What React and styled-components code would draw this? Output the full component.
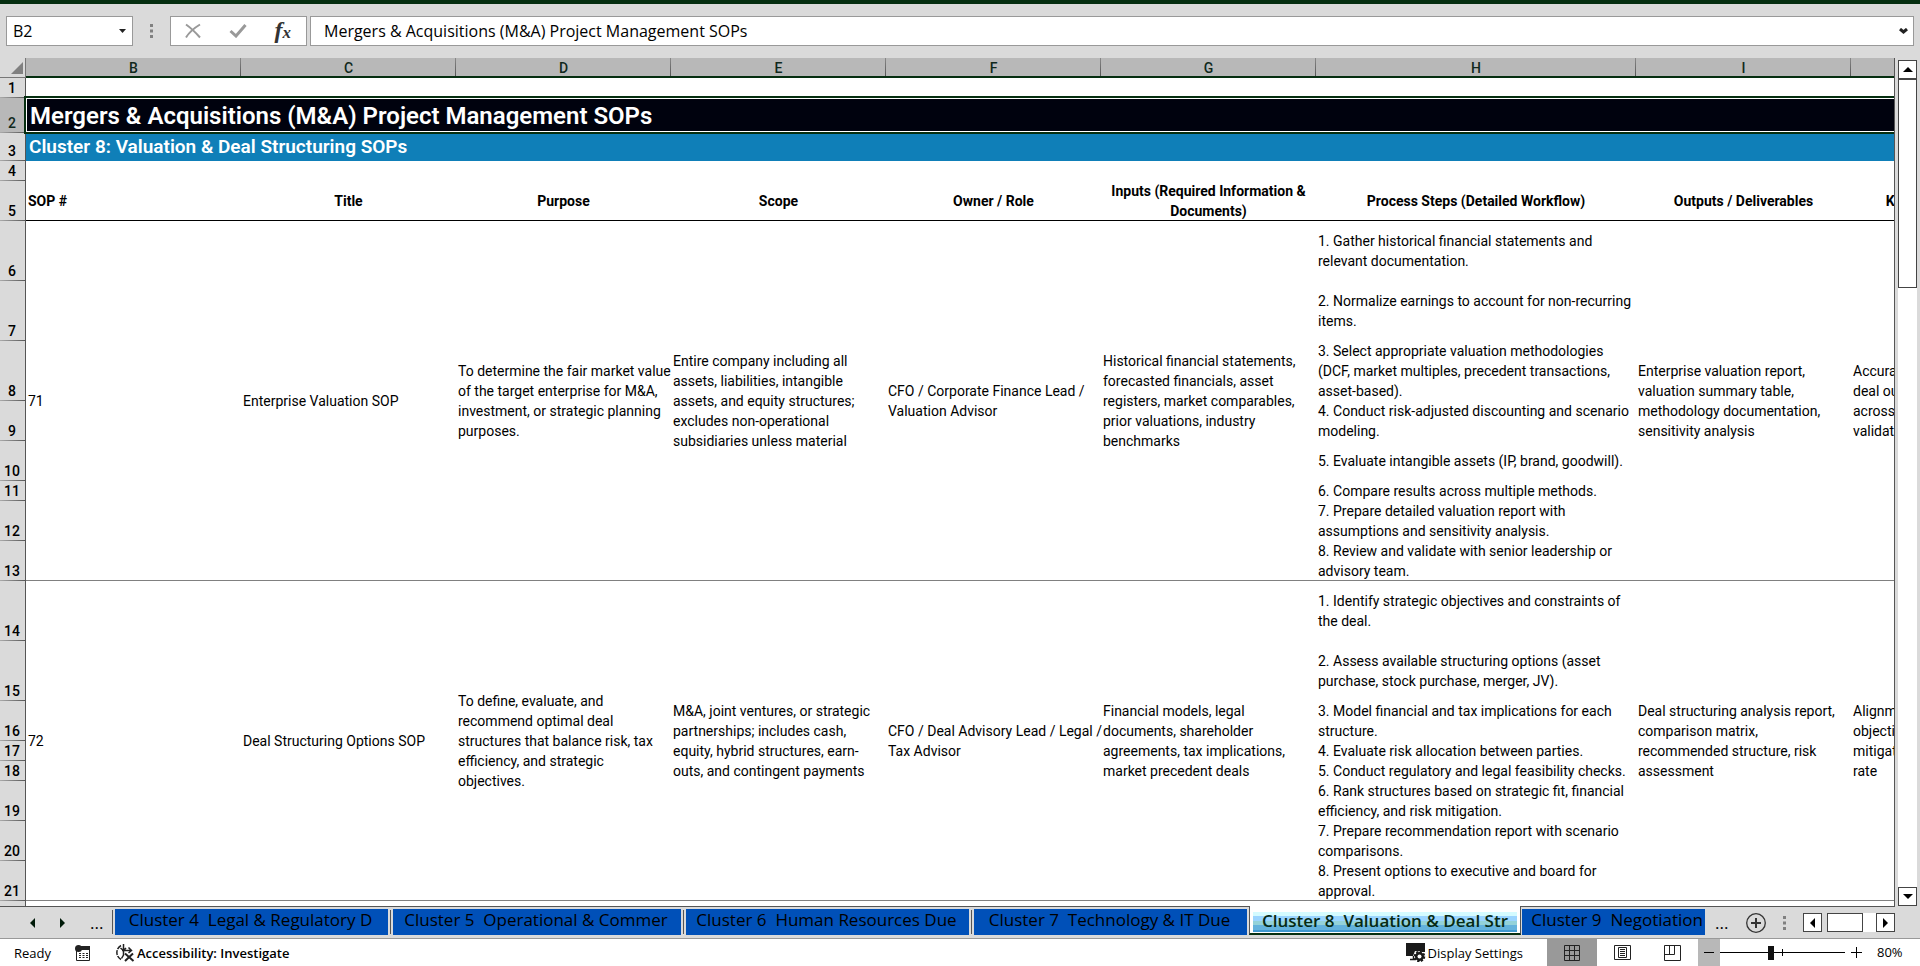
import React from 'react';
import styled, { createGlobalStyle } from 'styled-components';

const uiFont = `'Open Sans', 'Noto Sans', sans-serif`;
const cellFont = `Roboto, 'Liberation Sans', sans-serif`;

const columns = [
	{ letter: 'B', width: 215, title: 'SOP #' },
	{ letter: 'C', width: 215, title: 'Title' },
	{ letter: 'D', width: 215, title: 'Purpose' },
	{ letter: 'E', width: 215, title: 'Scope' },
	{ letter: 'F', width: 215, title: 'Owner / Role' },
	{ letter: 'G', width: 215, title: 'Inputs (Required Information &\nDocuments)' },
	{ letter: 'H', width: 320, title: 'Process Steps (Detailed Workflow)' },
	{ letter: 'I', width: 215, title: 'Outputs / Deliverables' },
	{ letter: 'J', width: 215, title: 'KPIs / Success Metrics' },
];

const sops = [
	{
		firstRow: 6,
		before: [
			'71',
			'Enterprise Valuation SOP',
			'To determine the fair market value\nof the target enterprise for M&A,\ninvestment, or strategic planning\npurposes.',
			'Entire company including all\nassets, liabilities, intangible\nassets, and equity structures;\nexcludes non-operational\nsubsidiaries unless material',
			'CFO / Corporate Finance Lead /\nValuation Advisor',
			'Historical financial statements,\nforecasted financials, asset\nregisters, market comparables,\nprior valuations, industry\nbenchmarks',
		],
		steps: [
			{ height: 60, text: '1. Gather historical financial statements and\nrelevant documentation.' },
			{ height: 60, text: '2. Normalize earnings to account for non-recurring\nitems.' },
			{ height: 60, text: '3. Select appropriate valuation methodologies\n(DCF, market multiples, precedent transactions,\nasset-based).' },
			{ height: 40, text: '4. Conduct risk-adjusted discounting and scenario\nmodeling.' },
			{ height: 40, text: '5. Evaluate intangible assets (IP, brand, goodwill).' },
			{ height: 20, text: '6. Compare results across multiple methods.' },
			{ height: 40, text: '7. Prepare detailed valuation report with\nassumptions and sensitivity analysis.' },
			{ height: 40, text: '8. Review and validate with senior leadership or\nadvisory team.' },
		],
		after: [
			'Enterprise valuation report,\nvaluation summary table,\nmethodology documentation,\nsensitivity analysis',
			'Accuracy of valuation,\ndeal outcomes\nacross methods,\nvalidation rate',
		],
	},
	{
		firstRow: 14,
		before: [
			'72',
			'Deal Structuring Options SOP',
			'To define, evaluate, and\nrecommend optimal deal\nstructures that balance risk, tax\nefficiency, and strategic\nobjectives.',
			'M&A, joint ventures, or strategic\npartnerships; includes cash,\nequity, hybrid structures, earn-\nouts, and contingent payments',
			'CFO / Deal Advisory Lead / Legal /\nTax Advisor',
			'Financial models, legal\ndocuments, shareholder\nagreements, tax implications,\nmarket precedent deals',
		],
		steps: [
			{ height: 60, text: '1. Identify strategic objectives and constraints of\nthe deal.' },
			{ height: 60, text: '2. Assess available structuring options (asset\npurchase, stock purchase, merger, JV).' },
			{ height: 40, text: '3. Model financial and tax implications for each\nstructure.' },
			{ height: 20, text: '4. Evaluate risk allocation between parties.' },
			{ height: 20, text: '5. Conduct regulatory and legal feasibility checks.' },
			{ height: 40, text: '6. Rank structures based on strategic fit, financial\nefficiency, and risk mitigation.' },
			{ height: 40, text: '7. Prepare recommendation report with scenario\ncomparisons.' },
			{ height: 40, text: '8. Present options to executive and board for\napproval.' },
		],
		after: [
			'Deal structuring analysis report,\ncomparison matrix,\nrecommended structure, risk\nassessment',
			'Alignment with\nobjectives, risk\nmitigation success\nrate',
		],
	},
];

const sheetTabs = [
	{ name: 'Cluster 4  Legal & Regulatory D', width: 273 },
	{ name: 'Cluster 5  Operational & Commer', width: 288 },
	{ name: 'Cluster 6  Human Resources Due', width: 283 },
	{ name: 'Cluster 7  Technology & IT Due', width: 273 },
];

const CancelIcon = () => (
	<svg width='18' height='16' viewBox='0 0 18 16' fill='none' stroke='#999' strokeWidth='2'>
		<path d='M2 1.5C7 5 12 10 16 14.500M16 1.500C11 4.500 5 9.500 2 14.500' />
	</svg>
);

const EnterIcon = () => (
	<svg width='18' height='14' viewBox='0 0 18 14' fill='none' stroke='#999' strokeWidth='3'>
		<path d='M1.500 7L7 12L16.500 1' />
	</svg>
);

const MacroIcon = () => (
	<svg width='16' height='16' viewBox='0 0 16 16'>
		<path d='M1.500 6V15.500H14.500V4' fill='none' stroke='#222' />
		<path d='M6 1H15V5H6z' fill='#222' />
		<circle cx='3.500' cy='3.500' r='3.500' fill='#222' />
		<path d='M4 8.500H6M7.500 8.500H9.500M11 8.500H13M4 10.500H6M7.500 10.500H9.500M11 10.500H13M4 12.500H6M7.500 12.500H9.500M11 12.500H13' stroke='#222' />
	</svg>
);

const AccessibilityIcon = () => (
	<svg width='20' height='18' viewBox='0 0 20 18' fill='none' stroke='#222'>
		<path d='M6 1.500A8 8 0 0 0 6 15.500' strokeWidth='1.500' strokeDasharray='5 1' />
		<path d='M8.500 0V6M5.500 4L8.500 6.500L11 4M7 6.500H16M13.500 3.500L16.500 6.500L13.500 9M8.500 6.500V11L6.500 14.500' strokeWidth='1.500' />
		<path d='M10 9.500L18.500 17M18 9.500L10 17' strokeWidth='2' />
	</svg>
);

const DisplayIcon = () => (
	<svg width='20' height='19' viewBox='0 0 20 19'>
		<path d='M0 0H19V9H16L9 8L7 13H0z' fill='#1a1a1a' />
		<path d='M4 16.500H9M7.500 13V16' stroke='#1a1a1a' strokeWidth='1.500' />
		<circle cx='13.500' cy='13.500' r='5' fill='#1a1a1a' stroke='#fff' strokeWidth='1' />
		<circle cx='13.500' cy='13.500' r='4.500' fill='none' stroke='#1a1a1a' strokeWidth='2.500' strokeDasharray='2 1.500' />
		<circle cx='13.500' cy='13.500' r='2' fill='#fff' />
	</svg>
);

const NormalViewIcon = () => (
	<svg width='16' height='16' viewBox='0 0 16 16' fill='none' stroke='#222'>
		<path d='M.5 .5H15.500V15.500H.5zM5.500 .5V15.500M10.500 .5V15.500M.5 5.500H15.500M.5 10.500H15.500' />
	</svg>
);

const PageLayoutIcon = () => (
	<svg width='17' height='15' viewBox='0 0 17 15' fill='none' stroke='#222'>
		<path d='M.5 .5H16.500V14.500H.5zM4.500 2.500H12.500V12.500H4.500zM6 4.500H11M6 6.500H11M6 8.500H11M6 10.500H11' />
	</svg>
);

const PageBreakIcon = () => (
	<svg width='17' height='16' viewBox='0 0 17 16' fill='none' stroke='#222'>
		<path d='M.5 .5H16.500V15.500H.5zM.5 9.500H10.500V.5M5.500 .5V9.500' />
	</svg>
);

const AddSheetIcon = () => (
	<svg width='20' height='20' viewBox='0 0 20 20' fill='none' stroke='#333'>
		<circle cx='10' cy='10' r='9.300' strokeWidth='1.300' />
		<path d='M10 5V15M5 10H15' strokeWidth='2' />
	</svg>
);

const Dots = () => (
	<svg width='3' height='14' viewBox='0 0 3 14' fill='#808080'>
		<path d='M0 0H3V3H0zM0 5.500H3V8.500H0zM0 11H3V14H0z' />
	</svg>
);

const arrows = {
	left: { size: [5, 10], d: 'M5 0V10L0 5z' },
	right: { size: [5, 10], d: 'M0 0V10L5 5z' },
	up: { size: [10, 5], d: 'M0 5H10L5 0z' },
	down: { size: [10, 5], d: 'M0 0H10L5 5z' },
	small: { size: [7, 4], d: 'M0 0H7L3.500 4z' },
};

const Arrow = ({ to, color = '#000' }) => {
	const [w, h] = arrows[to].size;
	return (
		<svg width={w} height={h} viewBox={`0 0 ${w} ${h}`} fill={color}>
			<path d={arrows[to].d} />
		</svg>
	);
};

const App = () => {
	return (
		<Window>
			<GlobalStyle />
			<FormulaBar>
				<NameBox>
					<BarInput aria-label='Name box' defaultValue='B2' />
					<PlainButton aria-label='Open name list'>
						<Arrow to='small' color='#222' />
					</PlainButton>
				</NameBox>
				<DotsHandle>
					<Dots />
				</DotsHandle>
				<FormulaActions>
					<PlainButton aria-label='Cancel'>
						<CancelIcon />
					</PlainButton>
					<PlainButton aria-label='Enter'>
						<EnterIcon />
					</PlainButton>
					<FxButton aria-label='Insert function'>
						f<small>x</small>
					</FxButton>
				</FormulaActions>
				<FormulaField>
					<BarInput
						aria-label='Formula'
						defaultValue='Mergers & Acquisitions (M&A) Project Management SOPs'
					/>
					<PlainButton aria-label='Expand formula bar'>
						<svg width='9' height='6' viewBox='0 0 9 6' fill='none' stroke='#222' strokeWidth='3'>
							<path d='M1 1L4.500 4L8 1' />
						</svg>
					</PlainButton>
				</FormulaField>
			</FormulaBar>

			<Main>
				<Sheet>
					<Table>
						<colgroup>
							<Col $width={26} />
							{columns.map((col) => (
								<Col key={col.letter} $width={col.width} />
							))}
						</colgroup>
						<thead>
							<Row $height={20}>
								<Corner>
									<svg width='12' height='12' viewBox='0 0 12 12' fill='#808080'>
										<path d='M12 0V12H0z' />
									</svg>
								</Corner>
								{columns.map((col) => (
									<ColumnHead key={col.letter} scope='col'>
										{col.letter}
									</ColumnHead>
								))}
							</Row>
						</thead>
						<tbody>
							<Row $height={20}>
								<RowHead scope='row'>1</RowHead>
								<Cell colSpan={9} />
							</Row>
							<Row $height={35}>
								<RowHead scope='row' $selected>
									2
								</RowHead>
								<TitleCell colSpan={9}>Mergers & Acquisitions (M&A) Project Management SOPs</TitleCell>
							</Row>
							<Row $height={28}>
								<RowHead scope='row'>3</RowHead>
								<SubtitleCell colSpan={9}>Cluster 8: Valuation & Deal Structuring SOPs</SubtitleCell>
							</Row>
							<Row $height={20}>
								<RowHead scope='row'>4</RowHead>
								<Cell colSpan={9} />
							</Row>
							<Row $height={40}>
								<RowHead scope='row'>5</RowHead>
								{columns.map((col, i) => (
									<HeadingCell key={col.letter} $left={i === 0}>
										{col.title}
									</HeadingCell>
								))}
							</Row>
							{sops.map((sop) =>
								sop.steps.map((step, i) => (
									<Row key={step.text} $height={step.height}>
										<RowHead scope='row'>{sop.firstRow + i}</RowHead>
										{i === 0 &&
											sop.before.map((text) => (
												<Cell key={text} rowSpan={8} $line>
													{text}
												</Cell>
											))}
										<Cell $line={i === 7}>{step.text}</Cell>
										{i === 0 &&
											sop.after.map((text) => (
												<Cell key={text} rowSpan={8} $line>
													{text}
												</Cell>
											))}
									</Row>
								))
							)}
							<Row $height={20}>
								<RowHead />
								<Cell colSpan={9} />
							</Row>
						</tbody>
					</Table>
				</Sheet>
				<VerticalScroll>
					<ScrollButton aria-label='Scroll up'>
						<Arrow to='up' />
					</ScrollButton>
					<VerticalThumb />
					<ScrollButton aria-label='Scroll down'>
						<Arrow to='down' />
					</ScrollButton>
				</VerticalScroll>
			</Main>

			<TabBar>
				<TabNav>
					<PlainButton aria-label='Previous sheet'>
						<Arrow to='left' color='#001a08' />
					</PlainButton>
					<PlainButton aria-label='Next sheet'>
						<Arrow to='right' color='#001a08' />
					</PlainButton>
					<PlainButton>...</PlainButton>
				</TabNav>
				<Tabs role='tablist'>
					{sheetTabs.map((tab) => (
						<TabSlot key={tab.name}>
							<Tab role='tab' $width={tab.width}>
								{tab.name}
							</Tab>
						</TabSlot>
					))}
					<ActiveTab role='tab' aria-selected='true'>
						<span>Cluster 8  Valuation & Deal Str</span>
					</ActiveTab>
					<LastTabSlot>
						<Tab role='tab' $width={183} $align='right'>
							Cluster 9  Negotiation
						</Tab>
					</LastTabSlot>
				</Tabs>
				<TabTools>
					<PlainButton>...</PlainButton>
					<PlainButton aria-label='New sheet'>
						<AddSheetIcon />
					</PlainButton>
					<Dots />
					<HorizontalScroll>
						<ScrollButton aria-label='Scroll left'>
							<Arrow to='left' />
						</ScrollButton>
						<HorizontalTrack>
							<HorizontalThumb />
						</HorizontalTrack>
						<ScrollButton aria-label='Scroll right'>
							<Arrow to='right' />
						</ScrollButton>
					</HorizontalScroll>
				</TabTools>
			</TabBar>

			<StatusBar>
				<StatusGroup>
					<span>Ready</span>
					<PlainButton aria-label='Record macro'>
						<MacroIcon />
					</PlainButton>
					<StatusButton $bold>
						<AccessibilityIcon />
						Accessibility: Investigate
					</StatusButton>
				</StatusGroup>
				<StatusTools>
					<StatusButton>
						<DisplayIcon />
						Display Settings
					</StatusButton>
					<Views>
						<ViewButton aria-label='Normal' $active>
							<NormalViewIcon />
						</ViewButton>
						<ViewButton aria-label='Page layout'>
							<PageLayoutIcon />
						</ViewButton>
						<ViewButton aria-label='Page break preview'>
							<PageBreakIcon />
						</ViewButton>
					</Views>
					<ZoomOut aria-label='Zoom out'>
						<svg width='10' height='1'>
							<path d='M0 .5H10' stroke='#000' />
						</svg>
					</ZoomOut>
					<ZoomSlider type='range' min='0' max='200' defaultValue='80' aria-label='Zoom' />
					<ZoomIn aria-label='Zoom in'>
						<svg width='11' height='11' stroke='#000'>
							<path d='M0 5.500H11M5.500 0V11' />
						</svg>
					</ZoomIn>
					<ZoomValue>80%</ZoomValue>
				</StatusTools>
			</StatusBar>
		</Window>
	);
};

const GlobalStyle = createGlobalStyle`
	* {
		box-sizing: border-box;
	}

	body {
		margin: 0;
		overflow: hidden;
	}

	button,
	input {
		font: inherit;
		color: inherit;
	}

	svg {
		display: block;
		flex: none;
	}
`;

const Window = styled.div`
	display: flex;
	flex-direction: column;
	height: 100vh;
	border-top: 4px solid #052e10;
	background: #dadada;
	color: #000;
	font: 17px/20px ${uiFont};
`;

const PlainButton = styled.button`
	display: flex;
	align-items: center;
	justify-content: center;
	padding: 0;
	border: 0;
	background: none;
`;

const FormulaBar = styled.div`
	display: flex;
	padding: 12px 6px;
`;

const Box = styled.div`
	display: flex;
	align-items: center;
	height: 30px;
	border: 1px solid #999;
	background: #fff;
`;

const NameBox = styled(Box)`
	width: 127px;
	padding: 0 6px;
`;

const BarInput = styled.input`
	flex: 1;
	min-width: 0;
	padding: 0;
	border: 0;
	outline: 0;
	font-size: 16px;
	text-overflow: ellipsis;
`;

const DotsHandle = styled.div`
	display: flex;
	align-items: center;
	justify-content: center;
	width: 37px;
`;

const FormulaActions = styled(Box)`
	justify-content: space-between;
	width: 137px;
	margin-right: 3px;
	padding: 0 15px 0 13px;
`;

const FxButton = styled(PlainButton)`
	align-items: baseline;
	color: #333;
	font: italic bold 24px/24px 'Liberation Serif', serif;

	small {
		font-size: 17px;
	}
`;

const FormulaField = styled(Box)`
	flex: 1;
	padding: 0 5px 0 13px;
`;

const Main = styled.main`
	display: flex;
	flex: 1;
	min-height: 0;
`;

const Sheet = styled.div`
	flex: 1;
	min-width: 0;
	overflow: hidden;
	border-right: 1px solid #555;
	background: #fff;
`;

const Table = styled.table`
	width: 0;
	table-layout: fixed;
	border-collapse: separate;
	border-spacing: 0;
	font: 14px/20px ${cellFont};
`;

const Col = styled.col`
	width: ${(props) => props.$width}px;
`;

const Row = styled.tr`
	height: ${(props) => props.$height}px;
`;

const Corner = styled.td`
	padding: 4px 3px;
	background: #dadada;
	box-shadow: inset -1px 0 #777, inset 0 -1px #777;

	svg {
		margin-left: auto;
	}
`;

const ColumnHead = styled.th`
	padding: 0;
	background: linear-gradient(#888, #555) right top / 1px 18px no-repeat, #b8b8b8;
	box-shadow: inset 0 -2px #052e10;
	color: #10281c;
	font-weight: 500;
`;

const RowHead = styled.th`
	padding: 0 2px 0 0;
	vertical-align: bottom;
	background: linear-gradient(90deg, #aaa, #555) left bottom / 100% 1px no-repeat,
		${(props) => (props.$selected ? '#b8b8b8' : '#dadada')};
	box-shadow: inset -1px 0 #555;
	color: ${(props) => (props.$selected ? '#10281c' : '#000')};
	font-weight: 500;
`;

const Cell = styled.td`
	padding: 0 2px;
	vertical-align: middle;
	white-space: pre;
	box-shadow: ${(props) => (props.$line ? 'inset 0 -1px #808080' : 'none')};
`;

const HeadingCell = styled(Cell)`
	box-shadow: inset 0 -1px #000;
	font-weight: 700;
	text-align: ${(props) => (props.$left ? 'left' : 'center')};
`;

const TitleCell = styled(Cell)`
	position: relative;
	padding: 0 4px;
	background: #00020e;
	color: #fff;
	font-size: 24px;
	font-weight: 600;

	/* selection frame around the merged cell */
	&::after {
		content: '';
		position: absolute;
		inset: -2px -2px -1px;
		border: 2px solid #052e10;
		box-shadow: inset 0 0 0 1px #fff;
	}
`;

const SubtitleCell = styled(Cell)`
	padding: 0 3px;
	background: #0f7fb8;
	color: #fff;
	font-size: 19px;
	font-weight: 600;
`;

const VerticalScroll = styled.div`
	display: flex;
	flex-direction: column;
	width: 19px;
	margin: 2px 3px 0;
	background: #fff;
`;

const ScrollButton = styled(PlainButton)`
	flex: none;
	width: 19px;
	height: 19px;
	border: 1px solid #444;
	background: #fff;
`;

const VerticalThumb = styled.div`
	height: 209px;
	margin-bottom: auto;
	border: 1px solid #444;
`;

const TabBar = styled.div`
	display: flex;
	height: 33px;
	border-bottom: 1px solid #999;
`;

const TabNav = styled.div`
	display: flex;
	align-items: center;
	gap: 25px;
	width: 112px;
	padding-left: 30px;
	border-top: 1px solid #555;
`;

const Tabs = styled.div`
	display: flex;
	flex: 1;
	min-width: 0;
	overflow: hidden;
`;

const TabSlot = styled.div`
	padding: 2px 2px 0 0;
	border-top: 1px solid #555;

	&::before {
		content: '';
		float: left;
		width: 1px;
		height: 24px;
		margin: 1px 2px 0 0;
		background: #555;
	}
`;

const Tab = styled.button`
	width: ${(props) => props.$width}px;
	height: 26px;
	padding: 0 2px 4px 0;
	overflow: hidden;
	border: 0;
	background: #0050b8;
	text-align: ${(props) => props.$align || 'center'};
	white-space: pre;
`;

const ActiveTab = styled.button`
	flex: none;
	width: 272px;
	height: 29px;
	padding: 6px 3px 1px;
	border: 0;
	border-left: 1px solid #555;
	border-right: 1px solid #555;
	border-bottom: 2px solid #052e10;
	background: #fff;
	color: #062a14;
	font-weight: 600;
	white-space: pre;

	span {
		display: block;
		height: 20px;
		line-height: 17px;
		background: linear-gradient(#d4fbff 4px, #9bd5ff 4px 9px, #93d2d9 9px 13px, #63b2dc 13px 18px, #3f98d0 18px);
	}
`;

const LastTabSlot = styled.div`
	flex: 1;
	padding: 2px 0 0 1px;
	border-top: 1px solid #555;
`;

const TabTools = styled.div`
	display: flex;
	align-items: center;
	justify-content: space-between;
	width: 180px;
	margin-right: 25px;
	border-top: 1px solid #555;
`;

const HorizontalScroll = styled.div`
	display: flex;
`;

const HorizontalTrack = styled.div`
	width: 54px;
	padding: 0 13px 0 5px;
	background: linear-gradient(90deg, #dadada 5px, #fff 5px);
`;

const HorizontalThumb = styled.div`
	height: 19px;
	border: 1px solid #444;
`;

const StatusBar = styled.footer`
	display: flex;
	justify-content: space-between;
	height: 27px;
	background: #fff;
	font-size: 13px;
`;

const StatusGroup = styled.div`
	display: flex;
	align-items: center;
	gap: 24px;
	padding-left: 14px;
`;

const StatusButton = styled(PlainButton)`
	gap: 2px;
	font-weight: ${(props) => (props.$bold ? 600 : 400)};
`;

const StatusTools = styled.div`
	display: flex;
`;

const Views = styled.div`
	display: flex;
	margin: 0 1px 0 24px;
`;

const ViewButton = styled(PlainButton)`
	width: 50px;
	background: ${(props) => (props.$active ? '#999' : 'none')};
`;

const ZoomOut = styled(PlainButton)`
	width: 22px;
	background: #b8b8b8;
`;

const ZoomSlider = styled.input`
	appearance: none;
	width: 125px;
	height: 27px;
	margin: 0;
	background:
		linear-gradient(#000, #000) center / 100% 1px no-repeat,
		linear-gradient(#000, #000) center / 1px 7px no-repeat;

	&::-webkit-slider-thumb {
		appearance: none;
		width: 6px;
		height: 14px;
		background: #111;
	}
`;

const ZoomIn = styled(PlainButton)`
	width: 22px;
`;

const ZoomValue = styled.output`
	width: 53px;
	padding-left: 10px;
	line-height: 27px;
`;

export default App;
